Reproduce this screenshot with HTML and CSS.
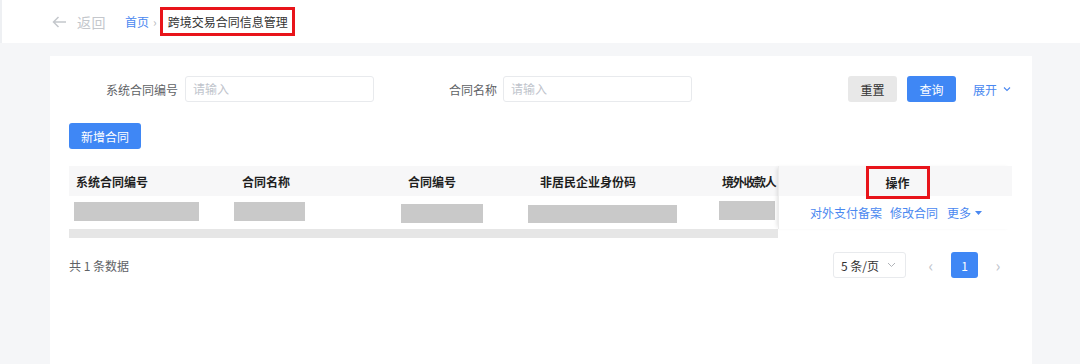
FILE: index.html
```html
<!DOCTYPE html>
<html lang="zh-CN">
<head>
<meta charset="utf-8">
<link rel="stylesheet" href="styles.css">
</head>
<body>
<div class="page">
  <header class="topbar">
    <div class="back">
      <svg class="back-arrow" width="14" height="12" viewBox="0 0 14 12"><path d="M14 6H1.5M6.5 1L1.5 6l5 5" fill="none" stroke="#c4c7cc" stroke-width="1.5"/></svg>
      <span class="back-text">返回</span>
    </div>
    <nav class="crumbs">
      <span class="crumb-home">首页</span>
      <span class="crumb-sep">›</span>
      <span class="crumb-current">跨境交易合同信息管理</span>
    </nav>
  </header>
  <main class="main">
    <section class="card">
      <div class="search">
        <div class="field">
          <label class="field-label label-a">系统合同编号</label>
          <div class="input">请输入</div>
        </div>
        <div class="field field-b">
          <label class="field-label label-b">合同名称</label>
          <div class="input">请输入</div>
        </div>
        <div class="actions">
          <button class="btn btn-gray">重置</button>
          <button class="btn btn-blue">查询</button>
          <span class="expand">展开
            <svg width="8" height="6" viewBox="0 0 8 6"><path d="M1 1.5l3 3 3-3" fill="none" stroke="#4a88f0" stroke-width="1.1"/></svg>
          </span>
        </div>
      </div>
      <button class="btn btn-blue btn-add">新增合同</button>

      <div class="table">
        <div class="scroll-part">
          <div class="scroll-inner">
            <div class="row head">
              <div class="cell c1">系统合同编号</div>
              <div class="cell c2">合同名称</div>
              <div class="cell c3">合同编号</div>
              <div class="cell c4">非居民企业身份码</div>
              <div class="cell c5">境外收款人</div>
            </div>
            <div class="row body">
              <div class="cell c1"><span class="mask m1"></span></div>
              <div class="cell c2"><span class="mask m2"></span></div>
              <div class="cell c3"><span class="mask m3"></span></div>
              <div class="cell c4"><span class="mask m4"></span></div>
              <div class="cell c5"><span class="mask m5"></span></div>
            </div>
          </div>
          <div class="scrollbar"></div>
        </div>
        <div class="fixed-part">
          <div class="fixed-head"><span class="op-title">操作</span></div>
          <div class="fixed-body">
            <span class="link">对外支付备案</span>
            <span class="link">修改合同</span>
            <span class="link more">更多
              <svg width="7" height="4" viewBox="0 0 7 4"><path d="M0 0h7L3.5 4z" fill="#4a88f0"/></svg>
            </span>
          </div>
        </div>
      </div>

      <div class="footer">
        <span class="total">共 1 条数据</span>
        <div class="pager">
          <div class="size-select">5 条/页
            <svg width="9" height="6" viewBox="0 0 9 6"><path d="M1 1l3.5 3.5L8 1" fill="none" stroke="#b0b3b8" stroke-width="1"/></svg>
          </div>
          <span class="pg-arrow pg-prev">‹</span>
          <span class="pg-num">1</span>
          <span class="pg-arrow pg-next">›</span>
        </div>
      </div>
    </section>
  </main>
</div>
</body>
</html>
```

FILE: styles.css
```css
* { box-sizing: border-box; }
html, body { margin: 0; padding: 0; }
body {
  font-family: "Noto Sans CJK SC", "Noto Sans", "Liberation Sans", sans-serif;
  font-size: 12px;
  color: #606266;
  background: #f5f6f8;
  width: 1080px;
  height: 364px;
  overflow: hidden;
}
.page { display: flex; flex-direction: column; height: 364px; }
.topbar {
  height: 43px;
  background: #fff;
  display: flex;
  align-items: center;
  padding-left: 50px;
  border-left: 2px solid #eef0f3;
  flex-shrink: 0;
  white-space: nowrap;
}
.back { display: flex; align-items: center; gap: 11px; }
.back-arrow { display: block; }
.back-text { font-size: 14px; color: #c4c7cc; letter-spacing: 0.5px; }
.crumbs { display: flex; align-items: center; margin-left: 19px; }
.crumb-home { color: #4a88f0; font-size: 12px; }
.crumb-sep { color: #b8bbc0; margin: 0 3px 0 4px; font-size: 12px; }
.crumb-current {
  color: #333;
  font-size: 12px;
  border: 3px solid #e8141a;
  padding: 0 4px 0 5px;
  height: 29px;
  display: flex;
  align-items: center;
  margin-top: -1px;
}
.main { flex: 1; padding: 13px 48px 0 50px; }
.card { background: #fff; height: 100%; padding: 20px 20px 0 19px; }
.search { display: flex; align-items: center; height: 26px; white-space: nowrap; }
.field { display: flex; align-items: center; }
.field-label { color: #606266; font-size: 12px; text-align: right; }
.label-a { width: 109px; margin-right: 7px; }
.field-b { margin-left: 75px; }
.label-b { margin-right: 6px; }
.input {
  width: 189px;
  height: 26px;
  border: 1px solid #e8eaed;
  border-radius: 3px;
  color: #c0c4cc;
  font-size: 12px;
  line-height: 24px;
  padding-left: 7px;
}
.actions { display: flex; align-items: center; margin-left: 156px; }
.btn {
  font-family: inherit;
  font-size: 12px;
  border: none;
  border-radius: 3px;
  height: 26px;
  padding: 0;
  cursor: pointer;
}
.btn-gray { background: #e8e8e8; color: #333; width: 49px; }
.btn-blue { background: #3f87f5; color: #fff; width: 49px; }
.actions .btn-blue { margin-left: 10px; }
.expand { color: #4a88f0; margin-left: 17px; display: flex; align-items: center; gap: 6px; white-space: nowrap; }
.btn-add { width: 72px; margin-top: 21px; display: block; }

.table { display: flex; margin-top: 17px; width: 943px; }
.scroll-part { width: 709px; overflow: hidden; }
.scroll-inner { width: 900px; }
.row { display: flex; }
.row.head { height: 30px; background: #f7f7f8; align-items: center; }
.row.head .cell { color: #1f1f1f; font-weight: 700; }
.row.body { height: 33px; align-items: center; }
.cell { padding-left: 7px; flex-shrink: 0; white-space: nowrap; }
.c1 { width: 166px; }
.c2 { width: 166px; }
.c3 { width: 132px; }
.c4 { width: 183px; }
.c5 { width: 62px; }
.row.head .c5 { letter-spacing: -1.3px; padding-left: 6px; }
.mask { display: block; background: #c9c9c9; height: 19px; }
.m1 { width: 125px; margin-left: -2px; margin-top: -2px; }
.m2 { width: 71px; margin-left: -8px; margin-top: -2px; }
.m3 { width: 82px; margin-left: -7px; margin-top: 2px; }
.m4 { width: 149px; margin-left: -12px; margin-top: 2px; height: 18px; }
.m5 { width: 56px; margin-left: -4px; margin-top: -4px; }
.scrollbar { height: 9px; background: #e6e6e6; }
.fixed-part {
  width: 234px;
  box-shadow: -3px 0 4px -2px rgba(0,0,0,0.12);
  border-left: 1px solid #ececec;
  position: relative;
  z-index: 1;
  background: #fff;
  height: 63px;
}
.fixed-head {
  height: 30px;
  background: #f7f7f8;
  display: flex;
  align-items: center;
  justify-content: center;
  padding-left: 4px;
}
.op-title {
  border: 3px solid #e8141a;
  width: 64px;
  height: 33px;
  margin-top: 3px;
  display: flex;
  align-items: center;
  justify-content: center;
  color: #1f1f1f;
  font-weight: 700;
}
.fixed-body {
  height: 33px;
  display: flex;
  align-items: center;
  padding-left: 31px;
  gap: 8px;
}
.link { color: #4a88f0; font-size: 12px; }
.more { display: flex; align-items: center; gap: 4px; margin-left: 1px; }

.footer {
  display: flex;
  align-items: center;
  justify-content: space-between;
  margin-top: 14px;
  width: 943px;
  height: 26px;
}
.total { color: #606266; font-size: 12px; }
.pager { display: flex; align-items: center; margin-right: 4px; }
.size-select {
  width: 73px;
  height: 26px;
  border: 1px solid #e8eaed;
  border-radius: 3px;
  display: flex;
  align-items: center;
  justify-content: space-between;
  padding: 0 9px 0 7px;
  color: #333;
  font-size: 12px;
}
.pg-arrow {
  width: 20px;
  text-align: center;
  color: #c0c4cc;
  font-size: 16px;
  line-height: 1;
}
.pg-prev { margin: 0 10px 0 15px; }
.pg-next { margin-left: 10px; }
.pg-num {
  width: 27px;
  height: 26px;
  background: #3f87f5;
  color: #fff;
  border-radius: 3px;
  display: flex;
  align-items: center;
  justify-content: center;
  font-size: 12px;
}
```
